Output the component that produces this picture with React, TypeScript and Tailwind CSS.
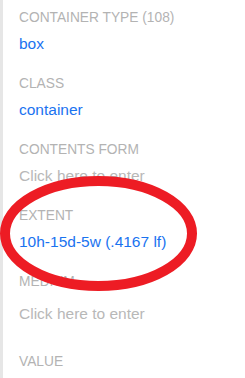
const fields = [
  { label: "CONTAINER TYPE (108)", value: "box", empty: false },
  { label: "CLASS", value: "container", empty: false },
  { label: "CONTENTS FORM", value: "Click here to enter", empty: true },
  { label: "EXTENT", value: "10h-15d-5w (.4167 lf)", empty: false },
];

function Field({ label, value, empty }: { label: string; value: string; empty: boolean }) {
  return (
    <div className="flex flex-col">
      <div className="h-5 text-[13.75px] leading-5 text-[#b3b3b3]">{label}</div>
      <div className={"mt-1 h-6 text-[15.5px] leading-6 " + (empty ? "text-[#b8b8b8]" : "text-[#1a73f0]")}>
        {value}
      </div>
    </div>
  );
}

export default function App() {
  return (
    <div className="relative w-[245px] h-[378px] overflow-hidden bg-white font-['Liberation_Sans',Arial,sans-serif]">
      <div className="flex h-full">
        <div className="w-[3px] shrink-0 bg-[#e6e6e6]" />
        <div className="flex flex-col gap-[18px] pt-2 pl-4">
          {fields.map((f) => (
            <Field key={f.label} {...f} />
          ))}
          <div className="flex flex-col">
            <div className="h-5 text-[13.75px] leading-5 text-[#b3b3b3]">MEDIUM</div>
            <div className="mt-[10px] mb-2 h-6 text-[15.5px] leading-6 text-[#b8b8b8]">Click here to enter</div>
          </div>
          <div className="flex flex-col">
            <div className="h-5 text-[13.75px] leading-5 text-[#b3b3b3]">VALUE</div>
          </div>
        </div>
      </div>
      <svg className="absolute left-0 top-0" width="245" height="378" viewBox="0 0 245 378">
        <ellipse cx="98.5" cy="233.5" rx="93.5" ry="52.5" fill="none" stroke="#ed1c24" strokeWidth="10" />
      </svg>
    </div>
  );
}
